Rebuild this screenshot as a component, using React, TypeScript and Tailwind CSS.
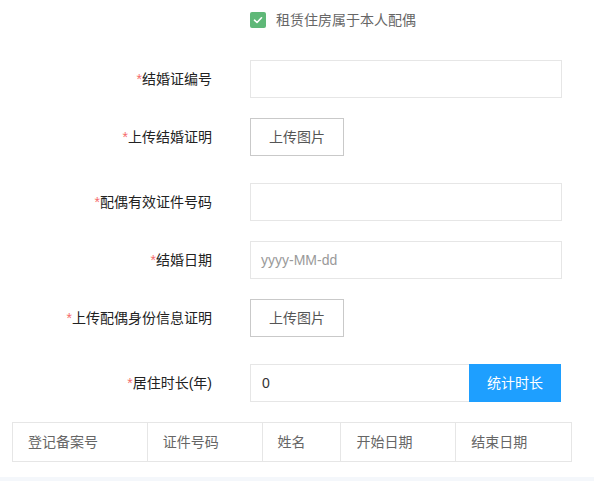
import React from "react";

const font = { fontFamily: '"Liberation Sans","Noto Sans CJK SC",sans-serif' };

function Label({ text }: { text: string }) {
  return (
    <div className="w-[212px] shrink-0 text-right text-[14px] text-[#222] leading-[20px]">
      <span className="text-[#f56c6c]">*</span>
      {text}
    </div>
  );
}

function Row({ label, children, className }: { label: string; children: React.ReactNode; className?: string }) {
  return (
    <div className={"flex items-center " + (className || "")}>
      <Label text={label} />
      <div className="ml-[38px] flex">{children}</div>
    </div>
  );
}

function Input({ value, placeholder }: { value?: string; placeholder?: string }) {
  return (
    <div className="w-[312px] h-[38px] border border-[#e6e6e6] bg-white flex items-center pl-[10px] text-[14px]">
      {value ? (
        <span className="text-[#333]">{value}</span>
      ) : placeholder ? (
        <span className="text-[#9a9a9a]">{placeholder}</span>
      ) : null}
    </div>
  );
}

function UploadBtn() {
  return (
    <div className="w-[94px] h-[38px] border border-[#c9c9c9] bg-white flex items-center justify-center text-[14px] text-[#555]">
      上传图片
    </div>
  );
}

export default function App() {
  const cols = [
    { t: "登记备案号", w: "w-[134px]" },
    { t: "证件号码", w: "w-[115px]" },
    { t: "姓名", w: "w-[79px]" },
    { t: "开始日期", w: "w-[115px]" },
    { t: "结束日期", w: "w-[116px]" },
  ];
  return (
    <div className="w-[594px] h-[481px] bg-white relative overflow-hidden" style={font}>
      <div className="flex flex-col">
        <div className="flex items-center pl-[250px] pt-[12px] h-[28px]">
          <div className="w-[16px] h-[16px] rounded-[2px] bg-[#5fb878] flex items-center justify-center">
            <svg width="12" height="12" viewBox="0 0 12 12">
              <path d="M2.5 6.2 L5 8.5 L9.5 3.8" stroke="white" strokeWidth="1.6" fill="none" strokeLinecap="round" strokeLinejoin="round" />
            </svg>
          </div>
          <span className="ml-[10px] text-[14px] text-[#666]">租赁住房属于本人配偶</span>
        </div>
        <Row label="结婚证编号" className="mt-[32px]">
          <Input />
        </Row>
        <Row label="上传结婚证明" className="mt-[20px]">
          <UploadBtn />
        </Row>
        <Row label="配偶有效证件号码" className="mt-[27px]">
          <Input />
        </Row>
        <Row label="结婚日期" className="mt-[20px]">
          <Input placeholder="yyyy-MM-dd" />
        </Row>
        <Row label="上传配偶身份信息证明" className="mt-[20px]">
          <UploadBtn />
        </Row>
        <Row label="居住时长(年)" className="mt-[27px]">
          <div className="w-[219px] h-[38px] border border-[#e6e6e6] border-r-0 flex items-center pl-[11px] text-[14px] text-[#333]">
            0
          </div>
          <div className="w-[92px] h-[38px] bg-[#1e9fff] text-white text-[14px] flex items-center justify-center">
            统计时长
          </div>
        </Row>
        <div className="mt-[20px] ml-[12px] flex w-[560px] h-[40px] border border-[#e6e6e6]">
          {cols.map((c, i) => (
            <div
              key={c.t}
              className={
                c.w +
                " h-full flex items-center pl-[15px] text-[14px] text-[#666] " +
                (i > 0 ? "border-l border-[#e6e6e6]" : "")
              }
            >
              {c.t}
            </div>
          ))}
        </div>
      </div>
      <div className="absolute left-0 right-0 bottom-0 h-[4px] bg-[#f4f7fb]" />
    </div>
  );
}
